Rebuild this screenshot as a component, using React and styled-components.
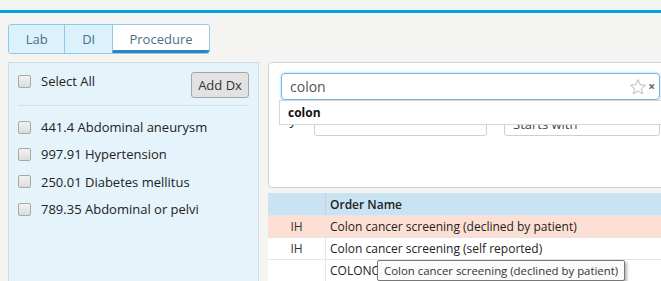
import styled, { createGlobalStyle } from "styled-components"

const GlobalStyle = createGlobalStyle`
  body {
    margin: 0;
    background: #f4f4f2;
    font-family: "Open Sans", "Liberation Sans", sans-serif;
    color: #222;
    overflow: hidden;
  }
`

const Page = styled.div`
  width: 661px;
  height: 281px;
  overflow: hidden;
`

const TopLine = styled.div`
  margin-top: 10px;
  height: 3px;
  background: #00a3e0;
`

const Tabs = styled.div`
  display: flex;
  margin: 11px 0 0 8px;
  width: 202px;
  height: 30px;
  border: 1px solid #8fcbe8;
  border-radius: 3px;
  box-sizing: border-box;
  overflow: hidden;
`

const Tab = styled.div`
  width: ${({ w }) => w}px;
  display: flex;
  align-items: center;
  justify-content: center;
  font-size: 13px;
  color: #4a6f86;
  background: ${({ active }) => (active ? "#fff" : "#dbf1fc")};
  border-left: ${({ first }) => (first ? "none" : "1px solid #8fcbe8")};
  border-bottom: ${({ active }) => (active ? "3px solid #2d85bf" : "none")};
  box-sizing: border-box;
  padding-top: ${({ active }) => (active ? "3px" : "0")};
`

const Main = styled.div`
  display: flex;
  gap: 9px;
  margin: 8px 0 0 8px;
`

const LeftPanel = styled.div`
  width: 251px;
  height: 240px;
  flex-shrink: 0;
  background: #e5f3fa;
  border: 1px solid #d3dbe0;
  box-sizing: border-box;
  padding: 9px 9px 0 9px;
`

const SelectRow = styled.div`
  display: flex;
  align-items: flex-start;
  justify-content: space-between;
  padding-bottom: 7px;
  border-bottom: 1px solid #d4dde2;
`

const CheckLabel = styled.label`
  display: flex;
  align-items: center;
  gap: 10px;
  font-size: 13px;
  line-height: 18px;
  color: #222;
`

const Box = styled.span`
  width: 11px;
  height: 11px;
  border: 1px solid #a8a8a8;
  border-radius: 2px;
  background: linear-gradient(#f2f2f2, #dcdcdc);
  flex-shrink: 0;
`

const AddButton = styled.button`
  font-family: inherit;
  font-size: 13px;
  color: #333;
  height: 26px;
  width: 58px;
  padding: 0;
  background: #e2e2e2;
  border: 1px solid #a6a6a6;
  border-radius: 3px;
`

const DxList = styled.div`
  display: flex;
  flex-direction: column;
  gap: 9.4px;
  padding-top: 12px;
`

const DxItem = styled(CheckLabel)`
  height: 18px;
`

const RightPanel = styled.div`
  width: 400px;
  flex-shrink: 0;
  display: flex;
  flex-direction: column;
  gap: 5px;
`

const SearchCard = styled.div`
  position: relative;
  height: 126px;
  background: #fff;
  border: 1px solid #d2d2d2;
  border-radius: 4px;
  box-sizing: border-box;
  padding: 10px 12px;
`

const SearchBox = styled.div`
  display: flex;
  align-items: center;
  height: 27px;
  width: 379px;
  box-sizing: border-box;
  border: 1px solid #6fb4ea;
  border-radius: 4px;
  box-shadow: 0 0 3px rgba(102, 175, 233, 0.6);
  padding: 0 4px 0 8px;
  font-size: 14px;
  color: #555;
`

const SearchText = styled.span`
  flex: 1;
`

const Clear = styled.span`
  font-size: 12px;
  color: #666;
  font-weight: bold;
  margin-left: 1px;
`

const Suggest = styled.div`
  position: absolute;
  top: 37px;
  left: 10px;
  width: 400px;
  height: 25px;
  box-sizing: border-box;
  background: #fff;
  border: 1px solid #d6d6d6;
  padding: 0 8px;
  display: flex;
  align-items: center;
  font-size: 12px;
  font-weight: bold;
  color: #111;
  z-index: 2;
`

const FilterRow = styled.div`
  display: flex;
  align-items: flex-start;
  margin-top: 11px;
`

const ByLabel = styled.span`
  width: 33px;
  flex-shrink: 0;
  font-size: 13px;
  line-height: 16px;
  padding-top: 1px;
`

const Select = styled.div`
  width: ${({ w }) => w}px;
  flex-shrink: 0;
  height: 25px;
  margin-right: ${({ gap }) => gap || 0}px;
  border: 1px solid #cfcfcf;
  border-radius: 3px;
  box-sizing: border-box;
  font-size: 13px;
  color: #444;
  padding: 3px 8px;
`

const Grid = styled.div`
  background: #fff;
  font-size: 12px;
`

const GridRow = styled.div`
  display: flex;
  height: ${({ head }) => (head ? 23 : 22)}px;
  background: ${({ bg }) => bg || "#fff"};
  border-bottom: 1px solid #e6e6e6;
  box-sizing: border-box;
`

const CodeCell = styled.div`
  width: 57px;
  display: flex;
  align-items: center;
  justify-content: center;
  border-right: 1px solid ${({ head }) => (head ? "#b7d3e3" : "#e6e6e6")};
  color: #333;
`

const NameCell = styled.div`
  flex: 1;
  display: flex;
  align-items: center;
  padding-left: 4px;
  color: #222;
  font-weight: ${({ head }) => (head ? 600 : 400)};
  position: relative;
`

const Tooltip = styled.div`
  position: absolute;
  left: 51px;
  top: 0;
  height: 19px;
  padding: 0 6px;
  display: flex;
  align-items: center;
  background: #fbfbfb;
  border: 1px solid #777;
  border-radius: 2px;
  box-shadow: 2px 2px 3px rgba(0, 0, 0, 0.3);
  font-size: 11.4px;
  color: #333;
  white-space: nowrap;
  z-index: 3;
`

const Star = () => (
  <svg width="18" height="18" viewBox="0 0 24 24">
    <path
      d="M12 2.5l2.9 6.3 6.9.7-5.2 4.6 1.5 6.8L12 17.4l-6.1 3.5 1.5-6.8-5.2-4.6 6.9-.7z"
      fill="none"
      stroke="#c8c8c8"
      strokeWidth="1.6"
      strokeLinejoin="round"
    />
  </svg>
)

const dx = [
  "441.4 Abdominal aneurysm",
  "997.91 Hypertension",
  "250.01 Diabetes mellitus",
  "789.35 Abdominal or pelvi",
]

export default function App() {
  return (
    <Page>
      <GlobalStyle />
      <TopLine />
      <Tabs>
        <Tab w={56} first>
          Lab
        </Tab>
        <Tab w={48}>DI</Tab>
        <Tab w={98} active>
          Procedure
        </Tab>
      </Tabs>
      <Main>
        <LeftPanel>
          <SelectRow>
            <CheckLabel>
              <Box />
              Select All
            </CheckLabel>
            <AddButton>Add Dx</AddButton>
          </SelectRow>
          <DxList>
            {dx.map((d) => (
              <DxItem key={d}>
                <Box />
                {d}
              </DxItem>
            ))}
          </DxList>
        </LeftPanel>
        <RightPanel>
          <SearchCard>
            <SearchBox>
              <SearchText>colon</SearchText>
              <Star />
              <Clear>×</Clear>
            </SearchBox>
            <Suggest>colon</Suggest>
            <FilterRow>
              <ByLabel>By</ByLabel>
              <Select w={173} gap={17} />
              <Select w={156}>Starts with</Select>
            </FilterRow>
          </SearchCard>
          <Grid>
            <GridRow head bg="#c9e3f2">
              <CodeCell head />
              <NameCell head>Order Name</NameCell>
            </GridRow>
            <GridRow bg="#fde0d3">
              <CodeCell>IH</CodeCell>
              <NameCell>Colon cancer screening (declined by patient)</NameCell>
            </GridRow>
            <GridRow>
              <CodeCell>IH</CodeCell>
              <NameCell>Colon cancer screening (self reported)</NameCell>
            </GridRow>
            <GridRow>
              <CodeCell />
              <NameCell>
                COLONOSCOPY
                <Tooltip>Colon cancer screening (declined by patient)</Tooltip>
              </NameCell>
            </GridRow>
          </Grid>
        </RightPanel>
      </Main>
    </Page>
  )
}
